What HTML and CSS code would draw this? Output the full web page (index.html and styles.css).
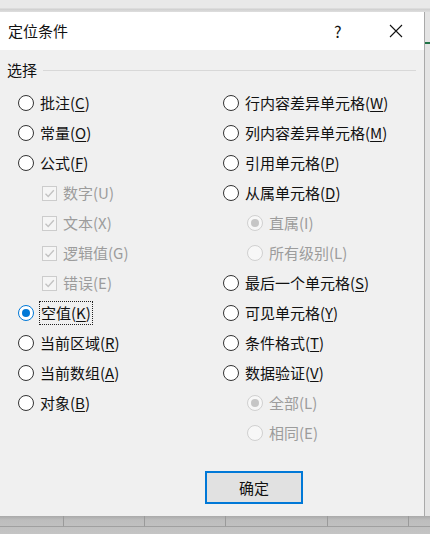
FILE: index.html
```html
<!DOCTYPE html>
<html lang="zh-CN">
<head>
    <meta charset="UTF-8" />
    <meta name="viewport" content="width=device-width, initial-scale=1" />
    <title>定位条件</title>
    <link rel="stylesheet" href="styles.css">
</head>
<body>

    <div class="sheet-top"></div>

    <div class="main">
        <div class="dialog">

            <!-- Barra de título -->
            <div class="titlebar">
                <span class="title">定位条件</span>
                <span class="help">?</span>
                <span class="close">
                    <svg width="14" height="14" viewBox="0 0 14 14"><path d="M1 1 L13 13 M13 1 L1 13" stroke="#111" stroke-width="1.1" fill="none"/></svg>
                </span>
            </div>

            <div class="body">
                <div class="group-head">
                    <span>选择</span>
                    <div class="group-line"></div>
                </div>

                <div class="columns">
                    <!-- Columna izquierda -->
                    <div class="col col-left">
                        <div class="opt"><span class="radio"></span><span>批注(<u>C</u>)</span></div>
                        <div class="opt"><span class="radio"></span><span>常量(<u>O</u>)</span></div>
                        <div class="opt"><span class="radio"></span><span>公式(<u>F</u>)</span></div>
                        <div class="opt sub off"><span class="check"><svg width="13" height="13" viewBox="0 0 13 13"><path d="M2.5 6.8 L5.2 9.5 L10.8 3.2" stroke="#c2c2c2" stroke-width="1.3" fill="none"/></svg></span><span>数字(U)</span></div>
                        <div class="opt sub off"><span class="check"><svg width="13" height="13" viewBox="0 0 13 13"><path d="M2.5 6.8 L5.2 9.5 L10.8 3.2" stroke="#c2c2c2" stroke-width="1.3" fill="none"/></svg></span><span>文本(X)</span></div>
                        <div class="opt sub off"><span class="check"><svg width="13" height="13" viewBox="0 0 13 13"><path d="M2.5 6.8 L5.2 9.5 L10.8 3.2" stroke="#c2c2c2" stroke-width="1.3" fill="none"/></svg></span><span>逻辑值(G)</span></div>
                        <div class="opt sub off"><span class="check"><svg width="13" height="13" viewBox="0 0 13 13"><path d="M2.5 6.8 L5.2 9.5 L10.8 3.2" stroke="#c2c2c2" stroke-width="1.3" fill="none"/></svg></span><span>错误(E)</span></div>
                        <div class="opt"><span class="radio on"></span><span class="focus">空值(<u>K</u>)</span></div>
                        <div class="opt"><span class="radio"></span><span>当前区域(<u>R</u>)</span></div>
                        <div class="opt"><span class="radio"></span><span>当前数组(<u>A</u>)</span></div>
                        <div class="opt"><span class="radio"></span><span>对象(<u>B</u>)</span></div>
                    </div>

                    <!-- Columna derecha -->
                    <div class="col col-right">
                        <div class="opt"><span class="radio"></span><span>行内容差异单元格(<u>W</u>)</span></div>
                        <div class="opt"><span class="radio"></span><span>列内容差异单元格(<u>M</u>)</span></div>
                        <div class="opt"><span class="radio"></span><span>引用单元格(<u>P</u>)</span></div>
                        <div class="opt"><span class="radio"></span><span>从属单元格(<u>D</u>)</span></div>
                        <div class="opt sub off"><span class="radio dis-on"></span><span>直属(I)</span></div>
                        <div class="opt sub off"><span class="radio dis"></span><span>所有级别(L)</span></div>
                        <div class="opt"><span class="radio"></span><span>最后一个单元格(<u>S</u>)</span></div>
                        <div class="opt"><span class="radio"></span><span>可见单元格(<u>Y</u>)</span></div>
                        <div class="opt"><span class="radio"></span><span>条件格式(<u>T</u>)</span></div>
                        <div class="opt"><span class="radio"></span><span>数据验证(<u>V</u>)</span></div>
                        <div class="opt sub off"><span class="radio dis-on"></span><span>全部(L)</span></div>
                        <div class="opt sub off"><span class="radio dis"></span><span>相同(E)</span></div>
                    </div>
                </div>

                <div class="actions">
                    <button class="btn-ok">确定</button>
                </div>
            </div>
        </div>
        <div class="sheet-side"></div>
    </div>

    <!-- Cuadrícula de Excel detrás del diálogo -->
    <div class="sheet-bottom">
        <div class="cell" style="width: 63px"></div>
        <div class="cell" style="width: 80px"></div>
        <div class="cell" style="width: 80px"></div>
        <div class="cell" style="width: 101px"></div>
        <div class="cell" style="width: 80px"></div>
        <div class="cell" style="width: 26px"></div>
    </div>

</body>
</html>
```

FILE: styles.css
```css
body {
    margin: 0;
    width: 430px;
    height: 534px;
    overflow: hidden;
    background-color: #c4c4c4;
    font-family: "Noto Sans CJK SC", "Microsoft YaHei", sans-serif;
    font-size: 15px;
    color: #111;
}
.sheet-top {
    height: 12px;
    background: linear-gradient(#e9e9e9, #e9e9e9 8px, #cfcfcf 9px, #dedede 12px);
}
.main {
    display: flex;
    height: 504px;
}
.dialog {
    width: 424px;
    display: flex;
    flex-direction: column;
    background-color: #f0f0f0;
    border-right: 1px solid #a9a9a9;
}
.sheet-side {
    flex: 1;
    background: linear-gradient(#e4e4e4, #e4e4e4 30px, #217346 30px, #217346 32px, #e4e4e4 32px);
}
.titlebar {
    height: 38px;
    background-color: #fff;
    display: flex;
    align-items: center;
    padding-left: 8px;
}
.title {
    flex: 1;
    line-height: 20px;
}
.help {
    width: 14px;
    margin-right: 41px;
    font-size: 16px;
    line-height: 20px;
}
.close {
    width: 14px;
    height: 14px;
    margin-right: 21px;
    display: flex;
}
.body {
    flex: 1;
    display: flex;
    flex-direction: column;
}
.group-head {
    display: flex;
    align-items: center;
    height: 20px;
    margin-top: 10px;
    padding-left: 7px;
}
.group-head span {
    line-height: 20px;
}
.group-line {
    flex: 1;
    height: 1px;
    background-color: #d8d8d8;
    margin-left: 6px;
    margin-right: 8px;
}
.columns {
    display: flex;
    margin-top: 8px;
}
.col-left {
    width: 197px;
    padding-left: 18px;
}
.col-right {
    flex: 1;
    padding-left: 8px;
}
.opt {
    display: flex;
    align-items: center;
    height: 30px;
    gap: 6px;
    white-space: nowrap;
}
.opt span {
    line-height: 20px;
}
.opt u {
    text-decoration-thickness: 1px;
    text-underline-offset: 2px;
}
.opt.sub {
    padding-left: 24px;
}
.opt.off {
    color: #9c9c9c;
}
.radio {
    width: 14px;
    height: 14px;
    border: 1px solid #333;
    border-radius: 50%;
    background-color: #fff;
    flex-shrink: 0;
    display: flex;
    align-items: center;
    justify-content: center;
}
.radio.on {
    border-color: #0078d7;
}
.radio.on::after {
    content: "";
    width: 8px;
    height: 8px;
    border-radius: 50%;
    background-color: #0078d7;
}
.radio.dis, .radio.dis-on {
    border-color: #d0d0d0;
    background-color: #f7f7f7;
}
.radio.dis-on::after {
    content: "";
    width: 8px;
    height: 8px;
    border-radius: 50%;
    background-color: #c6c6c6;
}
.check {
    width: 13px;
    height: 13px;
    border: 1px solid #cccccc;
    background-color: #f5f5f5;
    display: flex;
    flex-shrink: 0;
}
.focus {
    outline: 1px dotted #222;
    outline-offset: 1px;
    margin-left: 1px;
}
.actions {
    display: flex;
    padding-left: 205px;
    margin-top: 23px;
}
.btn-ok {
    width: 98px;
    height: 33px;
    border: 2px solid #0078d7;
    background-color: #e1e1e1;
    font-family: inherit;
    font-size: 15px;
    color: #111;
    padding: 0;
}
.sheet-bottom {
    display: flex;
    height: 18px;
    background: linear-gradient(#a9a9a9, #bdbdbd 4px, #c4c4c4);
}
.cell {
    height: 10px;
    border-right: 1px solid #9a9a9a;
    border-bottom: 1px solid #a0a0a0;
    flex-shrink: 0;
}
```
